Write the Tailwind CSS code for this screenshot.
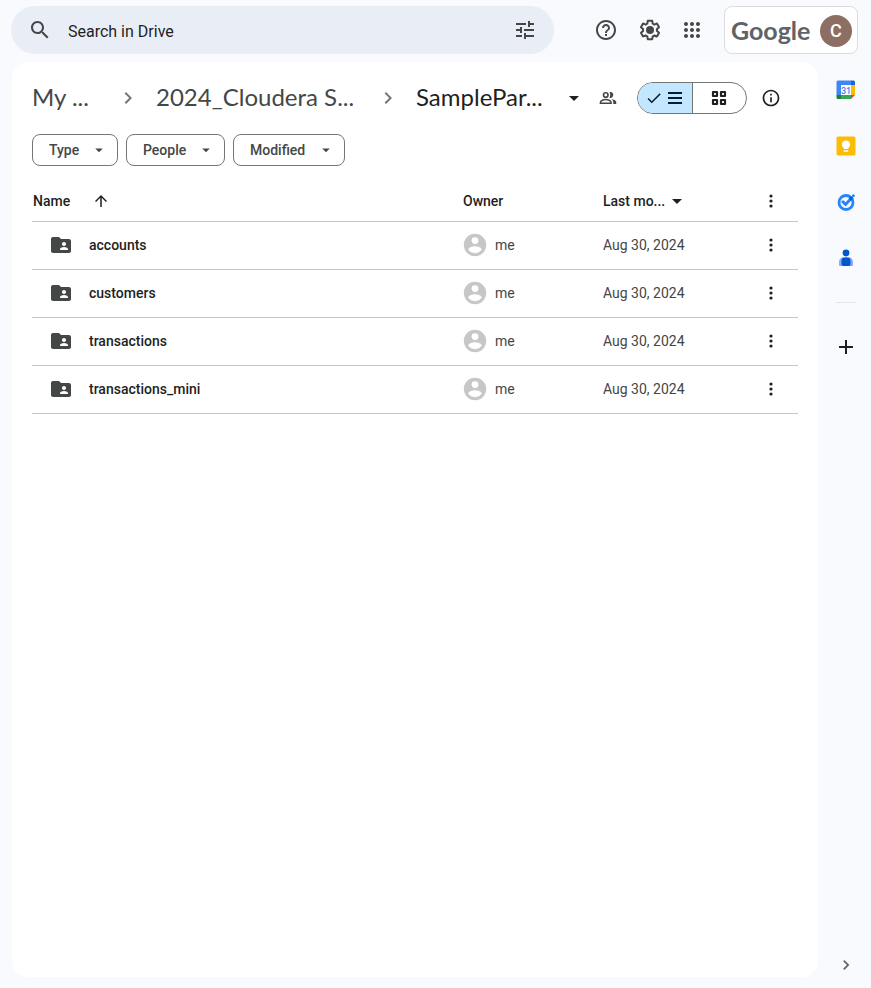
<!DOCTYPE html>
<html lang="en">
<head>
<meta charset="utf-8">
<meta name="viewport" content="width=device-width, initial-scale=1">
<title>Google Drive</title>
<script src="https://cdn.jsdelivr.net/npm/@tailwindcss/browser@4"></script>
</head>
<body class="flex min-h-screen flex-col bg-[#f8fafd] font-[Roboto,sans-serif] text-sm text-[#1f1f1f]">
<svg class="hidden" aria-hidden="true">
  <symbol id="more" viewBox="0 0 20 20"><circle cx="10" cy="5" r="1.6"/><circle cx="10" cy="10" r="1.6"/><circle cx="10" cy="15" r="1.6"/></symbol>
  <symbol id="caret" viewBox="0 0 24 24"><path d="M7 10l5 5 5-5z"/></symbol>
  <symbol id="chevron" viewBox="0 0 24 24"><path d="M10 6L8.59 7.41 13.17 12l-4.58 4.59L10 18l6-6z"/></symbol>
  <symbol id="folder" viewBox="0 0 24 24"><path d="M20 6h-8l-2-2H4c-1.1 0-1.99.9-1.99 2L2 18c0 1.1.9 2 2 2h16c1.1 0 2-.9 2-2V8c0-1.1-.9-2-2-2zm-5 3c1.1 0 2 .9 2 2s-.9 2-2 2-2-.9-2-2 .9-2 2-2zm4 8h-8v-1c0-1.33 2.67-2 4-2s4 .67 4 2v1z"/></symbol>
  <symbol id="person" viewBox="0 0 24 24"><path fill-rule="evenodd" d="M12 .8a11.2 11.2 0 1 0 0 22.4A11.2 11.2 0 0 0 12 .8zM12 4.200a3.400 3.400 0 1 1 0 6.800 3.400 3.400 0 0 1 0-6.800zM12 20.200c-2.800 0-5.300-1.400-6.700-3.600.1-2.200 4.500-3.400 6.700-3.400s6.600 1.200 6.700 3.400c-1.400 2.200-3.900 3.600-6.700 3.600z"/></symbol>
</svg>

<header class="flex h-[62px] items-start pt-[6px] pr-[13px] pl-[11px]">
  <form role="search" class="flex h-12 min-w-0 flex-1 items-center rounded-full bg-[#e9eef6] pr-[9px] pl-[9px] text-[#444746]">
    <button type="button" aria-label="Search" class="grid size-10 place-items-center"><svg class="size-6" fill="currentColor" viewBox="0 0 24 24"><path d="M15.500 14h-.79l-.28-.27C15.410 12.590 16 11.110 16 9.500 16 5.910 13.090 3 9.500 3S3 5.910 3 9.500 5.910 16 9.500 16c1.610 0 3.090-.59 4.230-1.570l.27.28v.79l5 4.990L20.490 19l-4.990-5zm-6 0C7.010 14 5 11.990 5 9.500S7.010 5 9.500 5 14 7.010 14 9.500 11.990 14 9.500 14z"/></svg></button>
    <input type="text" aria-label="Search in Drive" placeholder="Search in Drive" class="ml-2 h-10 min-w-0 flex-1 bg-transparent pt-[2px] text-base outline-none placeholder:text-[#1f1f1f]">
    <button type="button" aria-label="Search options" class="grid size-10 place-items-center"><svg class="size-6" fill="currentColor" viewBox="0 0 24 24"><path d="M3 17v2h6v-2H3zM3 5v2h10V5H3zm10 16v-2h8v-2h-8v-2h-2v6h2zM7 9v2H3v2h4v2h2V9H7zm14 4v-2H11v2h10zm-6-4h2V7h4V5h-4V3h-2v6z"/></svg></button>
  </form>
  <nav aria-label="Support and apps" class="ml-8 flex h-12 items-center text-[#444746]">
    <button aria-label="Support" class="grid size-10 place-items-center"><svg class="size-6" fill="currentColor" viewBox="0 0 24 24"><path d="M11 18h2v-2h-2v2zm1-16C6.480 2 2 6.480 2 12s4.480 10 10 10 10-4.480 10-10S17.520 2 12 2zm0 18c-4.410 0-8-3.590-8-8s3.590-8 8-8 8 3.590 8 8-3.590 8-8 8zm0-14c-2.210 0-4 1.790-4 4h2c0-1.100.9-2 2-2s2 .9 2 2c0 2-3 1.750-3 5h2c0-2.250 3-2.500 3-5 0-2.210-1.790-4-4-4z"/></svg></button>
    <button aria-label="Settings" class="ml-1 grid size-10 place-items-center"><svg class="size-6" viewBox="0 0 24 24"><path fill="currentColor" d="M13.850 22.250h-3.700c-.74 0-1.360-.54-1.450-1.270l-.27-1.890c-.27-.14-.53-.29-.79-.46l-1.800.72c-.7.26-1.470-.03-1.810-.65L2.200 15.530c-.35-.66-.2-1.440.36-1.880l1.530-1.190c-.01-.15-.02-.3-.02-.46 0-.15.01-.31.02-.46l-1.520-1.190c-.59-.45-.74-1.260-.37-1.880l1.850-3.190c.34-.62 1.110-.9 1.790-.63l1.810.73c.26-.17.52-.32.78-.46l.27-1.910c.09-.7.71-1.250 1.440-1.250h3.700c.74 0 1.360.54 1.450 1.270l.27 1.890c.27.14.53.29.79.46l1.800-.72c.71-.26 1.480.03 1.820.65l1.840 3.180c.36.66.2 1.440-.36 1.880l-1.520 1.190c.01.15.02.3.02.46s-.01.31-.02.46l1.520 1.190c.56.45.72 1.230.37 1.860l-1.860 3.220c-.34.62-1.110.9-1.800.63l-1.800-.72c-.26.17-.52.32-.78.46l-.27 1.910c-.1.680-.72 1.220-1.460 1.220zm-3.230-2h2.760l.37-2.550.53-.22c.44-.18.880-.44 1.340-.78l.45-.34 2.380.96 1.380-2.400-2.030-1.580.07-.56c.03-.26.06-.51.06-.78s-.03-.53-.06-.78l-.07-.56 2.030-1.580-1.390-2.400-2.390.96-.45-.35c-.42-.32-.87-.58-1.330-.77l-.52-.22-.37-2.550h-2.760l-.37 2.550-.53.21c-.44.190-.88.440-1.340.79l-.45.33-2.380-.95-1.390 2.390 2.030 1.580-.07.56a7 7 0 0 0-.06.790c0 .26.02.53.06.78l.07.56-2.030 1.580 1.380 2.400 2.390-.96.45.35c.43.33.86.58 1.330.77l.53.22z"/><circle cx="12" cy="12" r="4" fill="currentColor"/></svg></button>
    <button aria-label="Google apps" class="ml-[2px] grid size-10 place-items-center"><svg class="size-6" fill="currentColor" viewBox="0 0 24 24"><path d="M6 8c1.100 0 2-.9 2-2s-.9-2-2-2-2 .9-2 2 .9 2 2 2zm6 12c1.100 0 2-.9 2-2s-.9-2-2-2-2 .9-2 2 .9 2 2 2zm-6 0c1.100 0 2-.9 2-2s-.9-2-2-2-2 .9-2 2 .9 2 2 2zm0-6c1.100 0 2-.9 2-2s-.9-2-2-2-2 .9-2 2 .9 2 2 2zm6 0c1.100 0 2-.9 2-2s-.9-2-2-2-2 .9-2 2 .9 2 2 2zm4-8c0 1.100.9 2 2 2s2-.9 2-2-.9-2-2-2-2 .9-2 2zm-4 2c1.100 0 2-.9 2-2s-.9-2-2-2-2 .9-2 2 .9 2 2 2zm6 6c1.100 0 2-.9 2-2s-.9-2-2-2-2 .9-2 2 .9 2 2 2zm0 6c1.100 0 2-.9 2-2s-.9-2-2-2-2 .9-2 2 .9 2 2 2z"/></svg></button>
  </nav>
  <button aria-label="Google Account" class="ml-3 flex h-12 w-[134px] items-center justify-between rounded-lg border border-[#dadce0] bg-white pr-[5px] pl-[6px]">
    <span class="font-[Lato,sans-serif] text-[25px] leading-8 font-bold text-[#5f6368]">Google</span>
    <span class="mt-[2px] grid size-8 place-items-center rounded-full bg-[#8d6e63] text-lg font-medium text-white">C</span>
  </button>
</header>

<div class="flex flex-1">
  <main class="mb-[11px] ml-3 min-w-0 flex-1 rounded-2xl bg-white px-5 pt-4">
    <div class="flex h-10 items-center">
      <nav aria-label="Breadcrumb" class="flex min-w-0 flex-1 items-center font-[Lato,sans-serif] text-2xl whitespace-nowrap text-[#444746]">
        <a href="#" class="w-[84px] pb-[2px]">My ...</a>
        <svg class="mr-4 size-6 shrink-0" fill="#747775" viewBox="0 0 24 24"><use href="#chevron"/></svg>
        <a href="#" class="w-[220px] pb-[2px]">2024_Cloudera S...</a>
        <svg class="mr-4 size-6 shrink-0" fill="#747775" viewBox="0 0 24 24"><use href="#chevron"/></svg>
        <button class="flex items-center text-[#1f1f1f]"><span class="w-[146px] pb-[2px] text-left">SamplePar...</span><svg class="size-6" fill="currentColor"><use href="#caret"/></svg></button>
      </nav>
      <button aria-label="Manage access" class="mr-5 grid size-[18px] place-items-center text-[#444746]"><svg class="size-[18px]" viewBox="0 0 24 24" fill="none" stroke="currentColor" stroke-width="2.200"><circle cx="9" cy="8" r="3"/><path d="M2 19v-1.500C2 15.200 6.500 14 9 14s7 1.200 7 3.500V19z"/><path fill="currentColor" stroke="none" d="M14 4.300c2.500-.9 5 .9 5 3.700s-2.500 4.600-5 3.700c1.300-2 1.300-5.400 0-7.400zM16.700 13.200c2.600.5 6.300 1.800 6.300 4.300V20h-4v-2.500c0-1.800-.9-3.200-2.300-4.300z"/></svg></button>
      <div role="group" aria-label="Layout" class="flex h-8 w-[110px] overflow-hidden rounded-full border border-[#747775]">
        <button aria-label="List layout" aria-pressed="true" class="flex flex-1 items-center justify-center gap-[2px] border-r border-[#747775] bg-[#c2e7ff] text-[#001d35]"><svg class="size-[18px]" fill="currentColor" viewBox="0 0 24 24"><path d="M9 16.170L4.830 12l-1.420 1.410L9 19 21 7l-1.410-1.410z"/></svg><svg class="size-5" fill="currentColor" viewBox="0 0 20 20"><path d="M3 4h14v2H3zM3 9h14v2H3zM3 14h14v2H3z"/></svg></button>
        <button aria-label="Grid layout" class="grid flex-1 place-items-center"><svg class="size-[18px]" fill="none" stroke="currentColor" stroke-width="2.200" stroke-linejoin="round" viewBox="0 0 18 18"><path d="M3 3h4v4H3zM11 3h4v4h-4zM3 11h4v4H3zM11 11h4v4h-4z"/></svg></button>
      </div>
      <button aria-label="View details" class="mr-[17px] ml-[14px] grid size-5 place-items-center"><svg class="size-5" fill="currentColor" viewBox="0 0 24 24"><path d="M11 7h2v2h-2zm0 4h2v6h-2zm1-9C6.480 2 2 6.480 2 12s4.480 10 10 10 10-4.480 10-10S17.520 2 12 2zm0 18c-4.410 0-8-3.590-8-8s3.590-8 8-8 8 3.590 8 8-3.590 8-8 8z"/></svg></button>
    </div>
    <div class="mt-4 mb-4 flex gap-2 font-medium text-[#444746]">
      <button class="flex h-8 w-[86px] items-center justify-between rounded-lg border border-[#747775] pr-[9px] pl-4">Type<svg class="size-[18px]" fill="currentColor"><use href="#caret"/></svg></button>
      <button class="flex h-8 w-[99px] items-center justify-between rounded-lg border border-[#747775] pr-[9px] pl-4">People<svg class="size-[18px]" fill="currentColor"><use href="#caret"/></svg></button>
      <button class="flex h-8 w-[112px] items-center justify-between rounded-lg border border-[#747775] pr-[9px] pl-4">Modified<svg class="size-[18px]" fill="currentColor"><use href="#caret"/></svg></button>
    </div>
    <table class="w-full table-fixed text-left">
      <colgroup><col><col class="w-[140px]"><col class="w-[140px]"><col class="w-[55px]"></colgroup>
      <thead>
        <tr class="h-[39px] border-b border-[#c7c7c7]">
          <th class="p-0 pl-px font-medium"><button class="flex items-center gap-[22px]"><span>Name</span><svg class="size-[18px]" fill="currentColor" viewBox="0 0 24 24"><path d="M4 12l1.410 1.410L11 7.830V20h2V7.830l5.580 5.590L20 12l-8-8-8 8z"/></svg></button></th>
          <th class="p-0 font-medium">Owner</th>
          <th class="p-0 font-medium"><button class="flex items-center">Last mo...<svg class="size-6" fill="currentColor"><use href="#caret"/></svg></button></th>
          <th class="p-0"><button aria-label="More sort options" class="mx-auto block"><svg class="size-5" fill="currentColor"><use href="#more"/></svg></button></th>
        </tr>
      </thead>
      <tbody class="text-[#444746]">
        <tr class="h-12 border-b border-[#c7c7c7]">
          <td class="p-0 pl-[17px]"><a href="#" class="flex items-center gap-4 font-medium text-[#1f1f1f]"><svg class="size-6" fill="#444746"><use href="#folder"/></svg>accounts</a></td>
          <td class="p-0"><div class="flex items-center gap-2"><svg class="size-6" fill="#c7c7c7"><use href="#person"/></svg>me</div></td>
          <td class="p-0">Aug 30, 2024</td>
          <td class="p-0 text-[#1f1f1f]"><button aria-label="More actions for accounts" class="mx-auto block"><svg class="size-5" fill="currentColor"><use href="#more"/></svg></button></td>
        </tr>
        <tr class="h-12 border-b border-[#c7c7c7]">
          <td class="p-0 pl-[17px]"><a href="#" class="flex items-center gap-4 font-medium text-[#1f1f1f]"><svg class="size-6" fill="#444746"><use href="#folder"/></svg>customers</a></td>
          <td class="p-0"><div class="flex items-center gap-2"><svg class="size-6" fill="#c7c7c7"><use href="#person"/></svg>me</div></td>
          <td class="p-0">Aug 30, 2024</td>
          <td class="p-0 text-[#1f1f1f]"><button aria-label="More actions for customers" class="mx-auto block"><svg class="size-5" fill="currentColor"><use href="#more"/></svg></button></td>
        </tr>
        <tr class="h-12 border-b border-[#c7c7c7]">
          <td class="p-0 pl-[17px]"><a href="#" class="flex items-center gap-4 font-medium text-[#1f1f1f]"><svg class="size-6" fill="#444746"><use href="#folder"/></svg>transactions</a></td>
          <td class="p-0"><div class="flex items-center gap-2"><svg class="size-6" fill="#c7c7c7"><use href="#person"/></svg>me</div></td>
          <td class="p-0">Aug 30, 2024</td>
          <td class="p-0 text-[#1f1f1f]"><button aria-label="More actions for transactions" class="mx-auto block"><svg class="size-5" fill="currentColor"><use href="#more"/></svg></button></td>
        </tr>
        <tr class="h-12 border-b border-[#c7c7c7]">
          <td class="p-0 pl-[17px]"><a href="#" class="flex items-center gap-4 font-medium text-[#1f1f1f]"><svg class="size-6" fill="#444746"><use href="#folder"/></svg>transactions_mini</a></td>
          <td class="p-0"><div class="flex items-center gap-2"><svg class="size-6" fill="#c7c7c7"><use href="#person"/></svg>me</div></td>
          <td class="p-0">Aug 30, 2024</td>
          <td class="p-0 text-[#1f1f1f]"><button aria-label="More actions for transactions_mini" class="mx-auto block"><svg class="size-5" fill="currentColor"><use href="#more"/></svg></button></td>
        </tr>
      </tbody>
    </table>
  </main>

  <aside aria-label="Side panel" class="flex w-[53px] flex-col items-center pl-[3px]">
    <button aria-label="Calendar" class="grid size-14 place-items-center"><svg class="size-5" viewBox="0 0 20 20"><path fill="#4285f4" d="M2 .5h13V5H5v10H.5V2A1.500 1.500 0 0 1 2 .5z"/><path fill="#1967d2" d="M15 .5h2.500A1.500 1.500 0 0 1 19 2v3h-4z"/><path fill="#fbbc04" d="M15 5h4v10h-4z"/><path fill="#34a853" d="M5 15h10v4H5z"/><path fill="#188038" d="M.5 15H5v4H2A1.500 1.500 0 0 1 .5 17.500z"/><path fill="#ea4335" d="M15 15h4l-4 4z"/><path fill="#fff" d="M5 5h10v10H5z"/><text x="10" y="13.500" text-anchor="middle" font-family="Roboto" font-size="9" font-weight="500" fill="#4285f4">31</text></svg></button>
    <button aria-label="Keep" class="grid size-14 place-items-center"><svg class="size-5" viewBox="0 0 20 20"><rect width="19" height="19" x=".5" y=".5" rx="1.500" fill="#fbbc04"/><path fill="#fff" d="M10 4.500a4 4 0 0 0-2.200 7.400V13h4.400v-1.100A4 4 0 0 0 10 4.500zM7.800 14.200h4.400v1.500H7.800z"/></svg></button>
    <button aria-label="Tasks" class="grid size-14 place-items-center"><svg class="size-5" viewBox="0 0 20 20" fill="none"><circle cx="10" cy="10.500" r="7" stroke="#2684fc" stroke-width="2.800"/><path stroke="#2684fc" stroke-width="3" d="M6 9l3.600 3.400L15.500 6"/><path stroke="#0066da" stroke-width="3.400" d="M14 7.600l2.200-2.500"/><circle cx="17.400" cy="3.700" r="1.500" fill="#2684fc"/></svg></button>
    <button aria-label="Contacts" class="grid size-14 place-items-center"><svg class="size-5" viewBox="0 0 20 20"><circle cx="10" cy="5" r="3.400" fill="#0057cc"/><path fill="#86a9ff" d="M7 9.500h6c2.400 0 4 2 4 4.500v3a1 1 0 0 1-1 1H4a1 1 0 0 1-1-1v-3c0-2.500 1.600-4.500 4-4.500z"/><path fill="#0057cc" d="M8 9.500h4c1.600 0 2.500 1.600 2.500 3.500v3c0 1.200-.8 2-2 2h-5c-1.200 0-2-.8-2-2v-3c0-1.900.9-3.500 2.500-3.500z"/></svg></button>
    <hr class="mt-4 w-5 border-[#e3e5e8]">
    <button aria-label="Get add-ons" class="mt-6 grid size-10 place-items-center"><svg class="size-5" fill="currentColor" viewBox="0 0 20 20"><path d="M9 3h2v6h6v2h-6v6H9v-6H3V9h6z"/></svg></button>
    <button aria-label="Hide side panel" class="mt-auto mb-[13px] grid size-5 place-items-center"><svg class="size-5" fill="#5f6368"><use href="#chevron"/></svg></button>
  </aside>
</div>
</body>
</html>
